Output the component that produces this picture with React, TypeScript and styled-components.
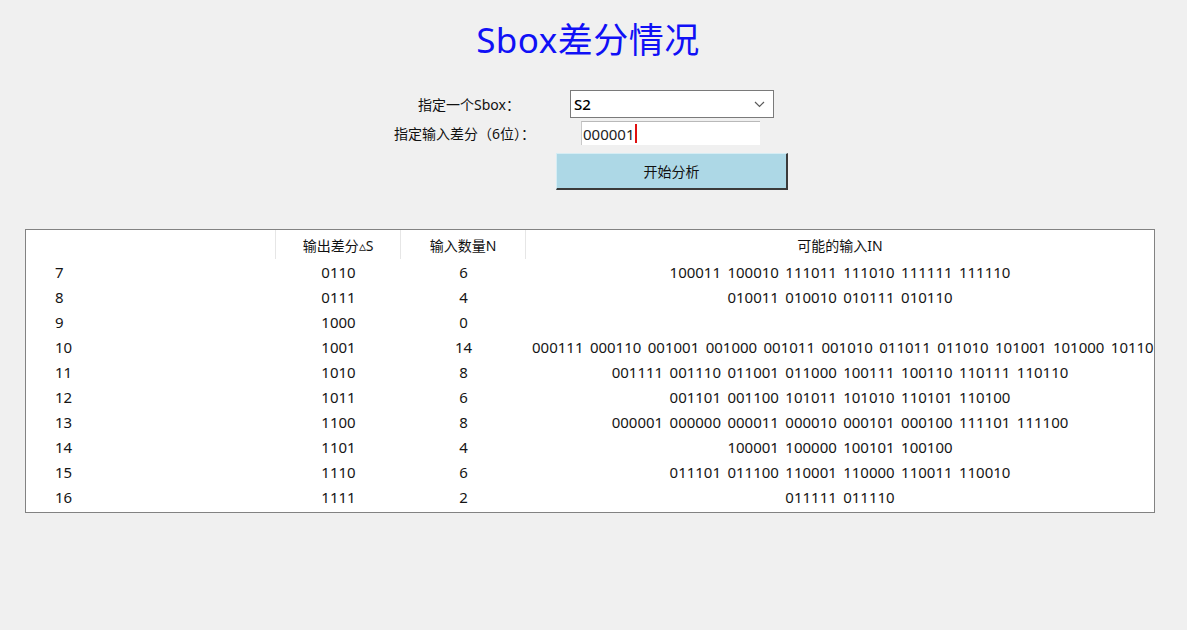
import styled, { createGlobalStyle } from "styled-components";

const GlobalStyle = createGlobalStyle`
  html, body {
    margin: 0;
    padding: 0;
    background: #f0f0f0;
  }
  body {
    font-family: "Noto Sans", "Noto Sans CJK SC", sans-serif;
    color: #111;
  }
`;

const Page = styled.div`
  width: 1187px;
  height: 630px;
  background: #f0f0f0;
  overflow: hidden;
`;

const Title = styled.h1`
  margin: 0;
  padding: 19px 11px 0 0;
  height: 42px;
  line-height: 42px;
  text-align: center;
  font-size: 35px;
  font-weight: 400;
  color: #1010f6;
  letter-spacing: 0.5px;
`;

const Form = styled.div`
  width: 400px;
  margin: 29px 0 0 394px;
  display: flex;
  flex-direction: column;
`;

const FieldRow = styled.div<{ $indent: number; $gap: number }>`
  display: flex;
  align-items: center;
  padding-left: ${(p) => p.$indent}px;
  margin-top: ${(p) => p.$gap}px;
`;

const Label = styled.label<{ $width: number }>`
  width: ${(p) => p.$width}px;
  font-size: 14px;
  color: #111;
  white-space: nowrap;
`;

const Combo = styled.div`
  box-sizing: border-box;
  width: 204px;
  height: 28px;
  border: 1px solid #7a7a7a;
  background: #fff;
  display: flex;
  align-items: center;
  justify-content: space-between;
  padding: 0 8px 0 3px;
  font-size: 15px;
  font-weight: 500;
  color: #000;
`;

const TextBox = styled.div`
  box-sizing: border-box;
  width: 179px;
  height: 24px;
  background: #fff;
  border-top: 1px solid #b9b9b9;
  border-left: 1px solid #c8c8c8;
  display: flex;
  align-items: center;
  padding-left: 1px;
  font-size: 15px;
  color: #222;
`;

const Caret = styled.span`
  display: inline-block;
  width: 2px;
  height: 19px;
  margin-left: 1px;
  background: #e01010;
`;

const AnalyzeButton = styled.button`
  box-sizing: border-box;
  width: 232px;
  height: 37px;
  margin: 8px 0 0 162px;
  background: #add8e6;
  border: none;
  border-top: 1px solid #d6edf4;
  border-left: 1px solid #d6edf4;
  border-right: 2px solid #3a3a3a;
  border-bottom: 2px solid #3a3a3a;
  font-family: "Noto Sans CJK SC", sans-serif;
  font-size: 14px;
  color: #111;
  padding: 0;
`;

const Table = styled.div`
  box-sizing: border-box;
  width: 1130px;
  height: 284px;
  margin: 39px 0 0 25px;
  border: 1px solid #828282;
  background: #fff;
  overflow: hidden;
`;

const GridRow = styled.div<{ $height: number }>`
  display: grid;
  grid-template-columns: 250px 125px 125px 1fr;
  height: ${(p) => p.$height}px;
`;

const HeadCell = styled.div<{ $sep?: boolean }>`
  display: flex;
  align-items: center;
  justify-content: center;
  font-size: 14px;
  color: #111;
  border-right: ${(p) => (p.$sep ? "1px solid #e6e6e6" : "none")};
  white-space: nowrap;
`;

const Cell = styled.div<{ $align?: "left" | "center"; $pad?: number }>`
  display: flex;
  align-items: center;
  justify-content: ${(p) => (p.$align === "left" ? "flex-start" : "center")};
  padding-left: ${(p) => p.$pad ?? 0}px;
  font-size: 15px;
  color: #151515;
  white-space: nowrap;
  overflow: hidden;
  word-spacing: 2.5px;
  line-height: 24px;
`;

const Chevron = () => (
  <svg width="11" height="7" viewBox="0 0 11 7">
    <polyline points="1,1 5.5,5.5 10,1" fill="none" stroke="#5a5a5a" strokeWidth="1.2" />
  </svg>
);

const rows = [
  { id: 7, out: "0110", n: 6, ins: "100011 100010 111011 111010 111111 111110" },
  { id: 8, out: "0111", n: 4, ins: "010011 010010 010111 010110" },
  { id: 9, out: "1000", n: 0, ins: "" },
  {
    id: 10,
    out: "1001",
    n: 14,
    ins: "000111 000110 001001 001000 001011 001010 011011 011010 101001 101000 101101 101100 111001 111000",
    overflow: true,
  },
  { id: 11, out: "1010", n: 8, ins: "001111 001110 011001 011000 100111 100110 110111 110110" },
  { id: 12, out: "1011", n: 6, ins: "001101 001100 101011 101010 110101 110100" },
  { id: 13, out: "1100", n: 8, ins: "000001 000000 000011 000010 000101 000100 111101 111100" },
  { id: 14, out: "1101", n: 4, ins: "100001 100000 100101 100100" },
  { id: 15, out: "1110", n: 6, ins: "011101 011100 110001 110000 110011 110010" },
  { id: 16, out: "1111", n: 2, ins: "011111 011110" },
];

export default function App() {
  return (
    <Page>
      <GlobalStyle />
      <Title>Sbox差分情况</Title>
      <Form>
        <FieldRow $indent={24} $gap={0}>
          <Label $width={152}>指定一个Sbox：</Label>
          <Combo>
            <span>S2</span>
            <Chevron />
          </Combo>
        </FieldRow>
        <FieldRow $indent={0} $gap={3}>
          <Label $width={187}>指定输入差分（6位）：</Label>
          <TextBox>
            000001
            <Caret />
          </TextBox>
        </FieldRow>
        <AnalyzeButton>开始分析</AnalyzeButton>
      </Form>
      <Table>
        <GridRow $height={29}>
          <HeadCell $sep />
          <HeadCell $sep>输出差分▵S</HeadCell>
          <HeadCell $sep>输入数量N</HeadCell>
          <HeadCell>可能的输入IN</HeadCell>
        </GridRow>
        {rows.map((r) => (
          <GridRow $height={25} key={r.id}>
            <Cell $align="left" $pad={29}>
              {r.id}
            </Cell>
            <Cell>{r.out}</Cell>
            <Cell>{r.n}</Cell>
            <Cell $align={r.overflow ? "left" : "center"} $pad={r.overflow ? 6 : 0}>
              {r.ins}
            </Cell>
          </GridRow>
        ))}
      </Table>
    </Page>
  );
}
